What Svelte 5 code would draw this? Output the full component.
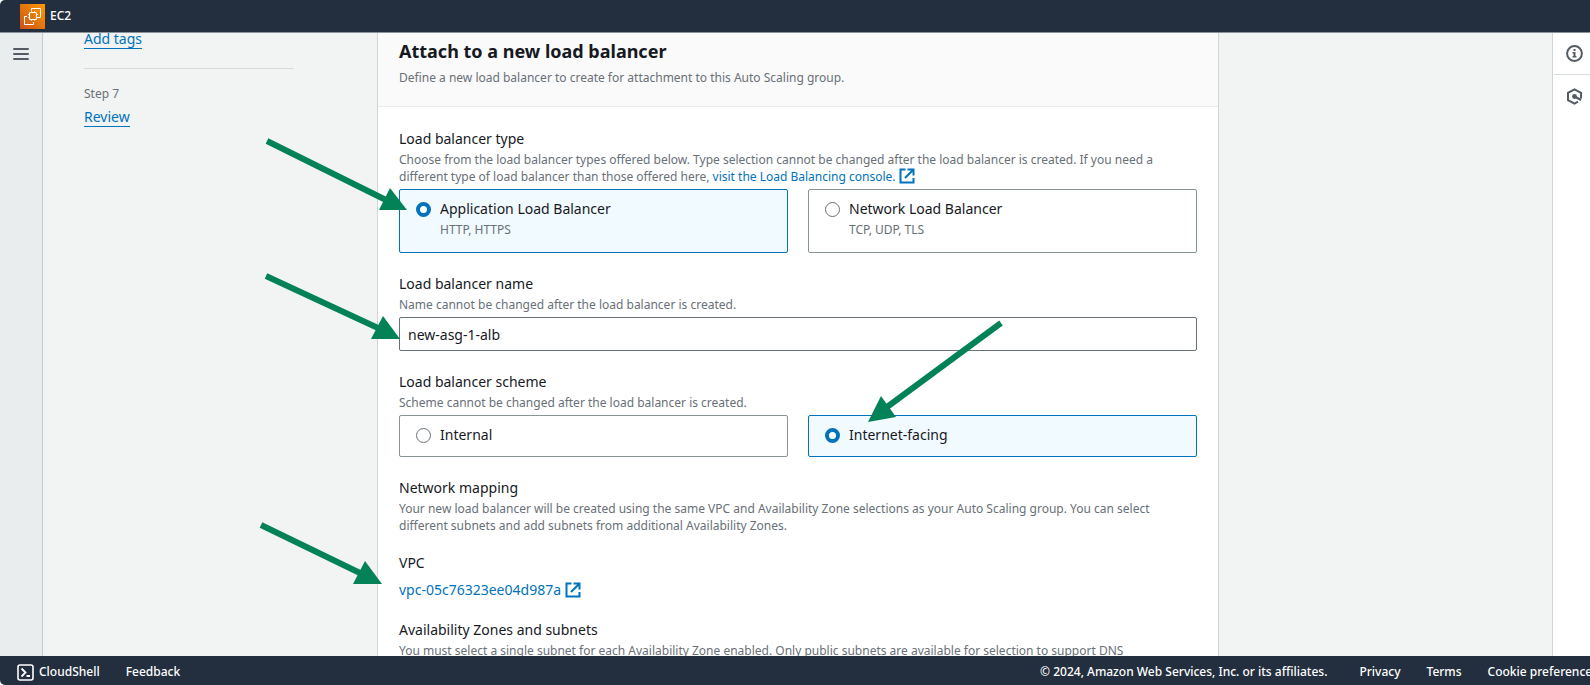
<script>
  let lbType = $state('application');
  let scheme = $state('internet');
  let name = $state('new-asg-1-alb');

  const arrows = [
    { from: [267, 141], to: [386, 200], head: '407,210 390,188 379,210' },
    { from: [266, 276], to: [378, 328], head: '400,339 383,316 371,339' },
    { from: [1001, 323], to: [887, 407], head: '868,422 881,396 896,417' },
    { from: [261, 525], to: [360, 573], head: '382,584 365,561 353,584' }
  ];
</script>

{#snippet external()}
  <svg class="external" viewBox="0 0 16 16" width="16" height="16" aria-hidden="true">
    <path d="M6.500 1.500h-5v13h13V10M8.500 1.500h6V7.500M14.500 1.500 6 10" fill="none" stroke="currentColor" stroke-width="2" />
  </svg>
{/snippet}

<div class="page">
  <header class="topbar">
    <a class="service" href="#ec2">
      <svg viewBox="0 0 25 25" width="25" height="25" aria-hidden="true">
        <defs>
          <linearGradient id="ember" x1="0" y1="1" x2="1" y2="0">
            <stop offset="0" stop-color="#c8511b" />
            <stop offset="1" stop-color="#ff9900" />
          </linearGradient>
        </defs>
        <rect width="25" height="25" fill="url(#ember)" />
        <g fill="none" stroke="#fff">
          <path d="M11.500 6.500v-2h9v9H18M7 12.500H4.500v8h9V18" />
          <rect x="9.500" y="8.500" width="7" height="7" rx="1" stroke-width="1.200" />
          <path d="M11.500 7v1.500M14.500 7v1.500M11.500 15.500V17M14.500 15.500V17M8 10.500h1.500M8 13.500h1.500M16.500 10.500H18M16.500 13.500H18" stroke-width=".8" />
        </g>
      </svg>
      <span>EC2</span>
    </a>
  </header>

  <div class="body">
    <aside class="rail">
      <button aria-label="Open navigation">
        <svg viewBox="0 0 16 16" width="16" height="16" aria-hidden="true">
          <path d="M1 3h14M1 8h14M1 13h14" stroke="#545b64" stroke-width="2" stroke-linecap="round" />
        </svg>
      </button>
    </aside>

    <div class="content">
      <nav class="steps">
        <a href="#tags">Add tags</a>
        <hr />
        <p>Step 7</p>
        <a href="#review">Review</a>
      </nav>

      <main class="card">
        <div class="card-head">
          <h2>Attach to a new load balancer</h2>
          <p class="hint">Define a new load balancer to create for attachment to this Auto Scaling group.</p>
        </div>

        <form class="form">
          <section>
            <h3 id="type-label">Load balancer type</h3>
            <p class="hint">
              Choose from the load balancer types offered below. Type selection cannot be changed after the load balancer is created. If you need a different type of load balancer than those offered here, <a href="#console">visit the Load Balancing console. {@render external()}</a>
            </p>
            <div class="tiles" role="radiogroup" aria-labelledby="type-label">
              <label class="tile tall" class:selected={lbType === 'application'}>
                <input type="radio" value="application" bind:group={lbType} />
                <span><b>Application Load Balancer</b><small>HTTP, HTTPS</small></span>
              </label>
              <label class="tile tall" class:selected={lbType === 'network'}>
                <input type="radio" value="network" bind:group={lbType} />
                <span><b>Network Load Balancer</b><small>TCP, UDP, TLS</small></span>
              </label>
            </div>
          </section>

          <section>
            <h3><label for="lb-name">Load balancer name</label></h3>
            <p class="hint">Name cannot be changed after the load balancer is created.</p>
            <input class="text" id="lb-name" type="text" bind:value={name} />
          </section>

          <section>
            <h3 id="scheme-label">Load balancer scheme</h3>
            <p class="hint">Scheme cannot be changed after the load balancer is created.</p>
            <div class="tiles" role="radiogroup" aria-labelledby="scheme-label">
              <label class="tile" class:selected={scheme === 'internal'}>
                <input type="radio" value="internal" bind:group={scheme} />
                <span><b>Internal</b></span>
              </label>
              <label class="tile" class:selected={scheme === 'internet'}>
                <input type="radio" value="internet" bind:group={scheme} />
                <span><b>Internet-facing</b></span>
              </label>
            </div>
          </section>

          <div class="mapping">
            <section>
              <h3>Network mapping</h3>
              <p class="hint">
                Your new load balancer will be created using the same VPC and Availability Zone selections as your Auto Scaling group. You can select different subnets and add subnets from additional Availability Zones.
              </p>
            </section>

            <section>
              <h3>VPC</h3>
              <a class="vpc" href="#vpc">vpc-05c76323ee04d987a {@render external()}</a>
            </section>

            <section>
              <h3>Availability Zones and subnets</h3>
              <p class="hint">
                You must select a single subnet for each Availability Zone enabled. Only public subnets are available for selection to support DNS
              </p>
            </section>
          </div>
        </form>
      </main>
    </div>

    <aside class="tools">
      <button aria-label="Info">
        <svg viewBox="0 0 17 17" width="17" height="17" aria-hidden="true">
          <circle cx="8.500" cy="8.500" r="7.400" fill="none" stroke="#545b64" stroke-width="2" />
          <path d="M7.500 4h2v2h-2zM6.500 7h3v4h1v1.500h-4V11h1V8.500h-1z" fill="#545b64" />
        </svg>
      </button>
      <button aria-label="Assistant">
        <svg viewBox="0 0 17 17" width="17" height="17" aria-hidden="true">
          <path d="M15 10.500V4.900L8.500 1.400 2 4.900v7.200l6.500 3.500 3.500-1.900" fill="none" stroke="#545b64" stroke-width="2" />
          <circle cx="8.500" cy="8.500" r="2.400" fill="#545b64" />
          <path d="m8.500 8.500 6.500 3.500" stroke="#545b64" stroke-width="2.200" />
        </svg>
      </button>
    </aside>
  </div>

  <footer class="footer">
    <a class="shell" href="#shell">
      <svg viewBox="0 0 17 17" width="17" height="17" aria-hidden="true">
        <rect x="1" y="1" width="15" height="15" rx="2" fill="none" stroke="#fff" stroke-width="1.600" />
        <path d="m4.500 4.500 4 4-4 4M9.500 12H13" fill="none" stroke="#fff" stroke-width="1.800" />
      </svg>
      CloudShell
    </a>
    <a href="#feedback">Feedback</a>
    <span class="legal">© 2024, Amazon Web Services, Inc. or its affiliates.</span>
    <a href="#privacy">Privacy</a>
    <a href="#terms">Terms</a>
    <a href="#cookies">Cookie preferences</a>
  </footer>

  <svg class="arrows" viewBox="0 0 1590 685" width="1590" height="685" aria-hidden="true">
    {#each arrows as a}
      <line x1={a.from[0]} y1={a.from[1]} x2={a.to[0]} y2={a.to[1]} />
      <polygon points={a.head} />
    {/each}
  </svg>
</div>

<style>
  :global(body) {
    margin: 0;
    overflow: hidden;
  }
  .page {
    position: relative;
    display: flex;
    flex-direction: column;
    height: 100vh;
    overflow: hidden;
    font: 14px/22px 'Noto Sans', 'Open Sans', sans-serif;
    color: #16191f;
    background: #fff;
  }
  .page * {
    box-sizing: border-box;
  }
  a {
    color: #0073bb;
    text-decoration: none;
  }
  h2,
  h3,
  p {
    margin: 0;
  }
  button {
    display: flex;
    align-items: center;
    justify-content: center;
    padding: 0;
    border: 0;
    background: none;
  }
  .topbar {
    display: flex;
    flex: none;
    align-items: center;
    height: 33px;
    padding-left: 20px;
    background: #232f3e;
    border-bottom: 1px solid #8a929b;
    border-top-left-radius: 5px;
  }
  .service {
    display: flex;
    align-items: center;
    gap: 5px;
    color: #fff;
    font-size: 12px;
    font-weight: 500;
  }
  .body {
    display: flex;
    flex: 1;
    min-height: 0;
    overflow: hidden;
    background: #f2f3f3;
  }
  .rail {
    flex: none;
    width: 43px;
    padding: 12px 12px 0;
    background: #eaeded;
    border-right: 1px solid #c5caca;
  }
  .rail button {
    width: 18px;
    height: 18px;
  }
  .content {
    display: grid;
    flex: 1;
    grid-template-columns: 334px minmax(0, 1fr) 333px;
  }
  .steps {
    display: flex;
    flex-direction: column;
    align-items: flex-start;
    width: 251px;
    padding-left: 41px;
  }
  .steps a {
    margin-top: -3px;
    line-height: 18px;
    border-bottom: 1px solid #0073bb;
  }
  .steps hr {
    width: 100%;
    margin: 19px 0 14px;
    border: 0;
    border-top: 1px solid #d5dbdb;
  }
  .steps p {
    margin-bottom: 6px;
    color: #687078;
    font-size: 12px;
  }
  .card {
    height: max-content;
    background: #fff;
    border: solid #d0d5d5;
    border-width: 0 1px;
  }
  .card-head {
    padding: 6px 21px 20px;
    background: #fafafa;
    border-bottom: 1px solid #eaeded;
  }
  h2 {
    font-size: 18px;
    font-weight: 700;
    line-height: 24px;
  }
  .card-head .hint {
    margin-top: 6px;
  }
  h3 {
    font-size: 14px;
    font-weight: 400;
    line-height: 22px;
  }
  .hint {
    margin-top: 1px;
    color: #687078;
    font-size: 12px;
    line-height: 17px;
  }
  .form {
    display: flex;
    flex-direction: column;
    gap: 20px;
    padding: 21px 21px 40px;
  }
  .mapping {
    display: flex;
    flex-direction: column;
    gap: 18px;
  }
  .external {
    vertical-align: -3px;
  }
  .tiles {
    display: grid;
    grid-template-columns: 1fr 1fr;
    gap: 20px;
    margin-top: 4px;
  }
  .tile {
    display: flex;
    gap: 9px;
    height: 42px;
    padding: 8px 16px;
    border: 1px solid #879596;
    border-radius: 2px;
  }
  .tall {
    height: 64px;
  }
  .selected {
    background: #f1faff;
    border-color: #0073bb;
  }
  .tile input {
    flex: none;
    appearance: none;
    width: 15px;
    height: 15px;
    margin: 4px 0 0;
    background: #fff;
    border: 1px solid #687078;
    border-radius: 50%;
  }
  .tile input:checked {
    border: 4px solid #0073bb;
  }
  .tile b {
    display: block;
    font-weight: 400;
  }
  .tile small {
    display: block;
    color: #687078;
    font-size: 12px;
    line-height: 20px;
  }
  .text {
    display: block;
    width: 100%;
    height: 34px;
    margin-top: 4px;
    padding: 0 8px;
    color: #16191f;
    font: inherit;
    background: #fff;
    border: 1px solid #687078;
    border-radius: 2px;
  }
  .vpc {
    display: block;
    margin-top: 5px;
  }
  .footer {
    display: flex;
    flex: none;
    align-items: center;
    height: 29px;
    padding: 3px 0 0 17px;
    overflow: hidden;
    color: #fff;
    font-size: 12px;
    font-weight: 500;
    white-space: nowrap;
    background: #232f3e;
    border-bottom-left-radius: 5px;
  }
  .footer a {
    flex: none;
    margin-right: 26px;
    color: inherit;
  }
  .footer .shell {
    display: flex;
    align-items: center;
    gap: 5px;
  }
  .footer a:last-child {
    margin-right: -8px;
  }
  .legal {
    margin-left: auto;
    margin-right: 32px;
  }
  .tools {
    flex: none;
    width: 38px;
    padding-left: 1px;
    background: #fff;
    border-left: 1px solid #d0d5d5;
  }
  .tools button {
    width: 100%;
    height: 42px;
    padding-left: 4px;
  }
  .tools button:first-child {
    border-bottom: 1px solid #d5dbdb;
  }
  .arrows {
    position: absolute;
    top: 0;
    left: 0;
    pointer-events: none;
    fill: #038257;
    stroke: #038257;
    stroke-width: 6px;
  }
  .arrows polygon {
    stroke: none;
  }
</style>
